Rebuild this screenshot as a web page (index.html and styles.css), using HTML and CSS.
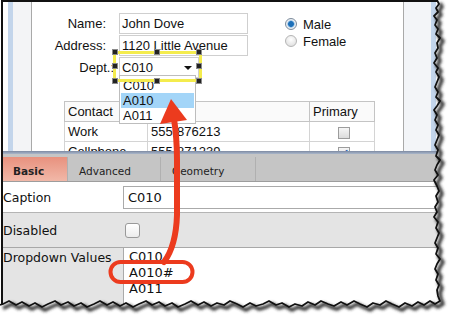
FILE: index.html
```html
<!DOCTYPE html>
<html lang="en">

<head>
    <meta charset="UTF-8">
    <title>Dropdown Values</title>
    <link rel="stylesheet" href="styles.css">
</head>

<body>
    <div class="shot">
        <div class="sheet">
            <section class="designer">
                <div class="gutter"></div>
                <div class="canvas">
                    <div class="top-fields">
                        <div class="fields">
                            <label class="lbl">Name:</label>
                            <div class="field">John Dove</div>
                            <label class="lbl">Address:</label>
                            <div class="field">1120 Little Avenue</div>
                            <label class="lbl lbl-dept">Dept.:</label>
                            <div class="field select">C010<span class="caret"></span></div>
                        </div>
                        <div class="radios">
                            <div class="radio on"><span class="dot"></span>Male</div>
                            <div class="radio"><span class="dot"></span>Female</div>
                        </div>
                    </div>

                    <table class="contacts">
                        <tr class="head">
                            <td class="c-contact">Contact</td>
                            <td class="c-phone"></td>
                            <td class="c-primary">Primary</td>
                        </tr>
                        <tr>
                            <td>Work</td>
                            <td>555-876213</td>
                            <td class="c-check"><span class="tick"></span></td>
                        </tr>
                        <tr>
                            <td>Cellphone</td>
                            <td>555-871239</td>
                            <td class="c-check"><span class="tick checked">&#10003;</span></td>
                        </tr>
                    </table>

                    <!-- open dropdown of the Dept. field -->
                    <ul class="picker">
                        <li>C010</li>
                        <li class="hl">A010</li>
                        <li>A011</li>
                    </ul>

                    <!-- designer selection around the Dept. field -->
                    <div class="selection">
                        <span class="h l t"></span><span class="h c t"></span><span class="h r t"></span>
                        <span class="h l m"></span><span class="h r m"></span>
                        <span class="h l b"></span><span class="h c b"></span><span class="h r b"></span>
                    </div>
                </div>
                <div class="side"></div>
            </section>

            <div class="divider"></div>

            <section class="props">
                <div class="tabs">
                    <div class="tab active">Basic</div>
                    <div class="tab">Advanced</div>
                    <div class="tab">Geometry</div>
                </div>
                <div class="row row-caption">
                    <div class="key">Caption</div>
                    <div class="text-input">C010</div>
                </div>
                <div class="row row-disabled">
                    <div class="key">Disabled</div>
                    <span class="checkbox"></span>
                </div>
                <div class="row row-values">
                    <div class="key">Dropdown Values</div>
                    <div class="textarea">C010<br>A010#<br>A011</div>
                </div>
            </section>
        </div>

        <svg class="callout" width="453" height="320" viewBox="0 0 453 320">
            <rect x="110.5" y="262" width="82" height="20" rx="10" fill="none" stroke="#ec3b1e" stroke-width="4" />
            <path d="M164 262 Q176 246 177 215 L177 160 Q177 138 174 119" fill="none" stroke="#ec3b1e"
                stroke-width="6" stroke-linecap="round" />
            <polygon points="171,99 160,124 187,120" fill="#ec3b1e" />
        </svg>

        <!-- torn paper edges -->
        <svg class="edges" width="453" height="320" viewBox="0 0 453 320">
            <defs>
                <filter id="soft" x="-10%" y="-10%" width="120%" height="120%">
                    <feGaussianBlur stdDeviation="1.8" />
                </filter>
            </defs>
            <path fill="#fff"
                d="M437,0 L439,4 L436,8 L438,12 L434,16 L437,20 L435,25 L438,29 L436,34 L440,38 L437,43 L438,48 L435,53 L437,58 L434,63 L438,68 L436,72 L439,77 L437,82 L435,87 L438,92 L436,97 L440,101 L437,106 L434,110 L437,115 L435,120 L438,125 L436,130 L439,135 L437,140 L435,145 L438,150 L436,156 L440,160 L437,165 L435,170 L438,175 L434,180 L437,186 L439,191 L436,196 L438,202 L435,207 L437,212 L434,217 L438,222 L436,228 L439,233 L437,238 L435,243 L438,248 L436,254 L440,259 L437,264 L435,269 L438,274 L436,280 L439,285 L437,290 L438,296 L440,301 L435,304 L430,301 L424,305 L418,302 L412,306 L405,303 L399,307 L392,304 L386,301 L380,305 L373,303 L367,307 L360,304 L354,301 L347,305 L341,302 L334,306 L328,304 L321,301 L315,305 L308,302 L302,306 L295,304 L289,307 L282,303 L276,305 L269,301 L263,304 L256,306 L250,303 L243,307 L237,304 L230,301 L224,305 L217,303 L211,306 L204,302 L198,305 L191,301 L185,304 L178,307 L172,303 L165,306 L159,302 L152,305 L146,301 L139,304 L133,307 L126,303 L120,306 L113,302 L107,305 L100,301 L94,304 L87,307 L81,303 L74,306 L68,302 L61,305 L55,301 L48,304 L42,307 L35,303 L29,306 L22,302 L16,305 L9,301 L3,304 L0,305 L0,320 L453,320 L453,0 Z" />
            <path class="edge-line" stroke="#333" stroke-width="3.5" filter="url(#soft)" transform="translate(3 3)"
                d="M437,0 L439,4 L436,8 L438,12 L434,16 L437,20 L435,25 L438,29 L436,34 L440,38 L437,43 L438,48 L435,53 L437,58 L434,63 L438,68 L436,72 L439,77 L437,82 L435,87 L438,92 L436,97 L440,101 L437,106 L434,110 L437,115 L435,120 L438,125 L436,130 L439,135 L437,140 L435,145 L438,150 L436,156 L440,160 L437,165 L435,170 L438,175 L434,180 L437,186 L439,191 L436,196 L438,202 L435,207 L437,212 L434,217 L438,222 L436,228 L439,233 L437,238 L435,243 L438,248 L436,254 L440,259 L437,264 L435,269 L438,274 L436,280 L439,285 L437,290 L438,296 L440,301 L435,304 L430,301 L424,305 L418,302 L412,306 L405,303 L399,307 L392,304 L386,301 L380,305 L373,303 L367,307 L360,304 L354,301 L347,305 L341,302 L334,306 L328,304 L321,301 L315,305 L308,302 L302,306 L295,304 L289,307 L282,303 L276,305 L269,301 L263,304 L256,306 L250,303 L243,307 L237,304 L230,301 L224,305 L217,303 L211,306 L204,302 L198,305 L191,301 L185,304 L178,307 L172,303 L165,306 L159,302 L152,305 L146,301 L139,304 L133,307 L126,303 L120,306 L113,302 L107,305 L100,301 L94,304 L87,307 L81,303 L74,306 L68,302 L61,305 L55,301 L48,304 L42,307 L35,303 L29,306 L22,302 L16,305 L9,301 L3,304 L0,305" />
            <path class="edge-line" stroke="#111" stroke-width="1.8"
                d="M437,0 L439,4 L436,8 L438,12 L434,16 L437,20 L435,25 L438,29 L436,34 L440,38 L437,43 L438,48 L435,53 L437,58 L434,63 L438,68 L436,72 L439,77 L437,82 L435,87 L438,92 L436,97 L440,101 L437,106 L434,110 L437,115 L435,120 L438,125 L436,130 L439,135 L437,140 L435,145 L438,150 L436,156 L440,160 L437,165 L435,170 L438,175 L434,180 L437,186 L439,191 L436,196 L438,202 L435,207 L437,212 L434,217 L438,222 L436,228 L439,233 L437,238 L435,243 L438,248 L436,254 L440,259 L437,264 L435,269 L438,274 L436,280 L439,285 L437,290 L438,296 L440,301 L435,304 L430,301 L424,305 L418,302 L412,306 L405,303 L399,307 L392,304 L386,301 L380,305 L373,303 L367,307 L360,304 L354,301 L347,305 L341,302 L334,306 L328,304 L321,301 L315,305 L308,302 L302,306 L295,304 L289,307 L282,303 L276,305 L269,301 L263,304 L256,306 L250,303 L243,307 L237,304 L230,301 L224,305 L217,303 L211,306 L204,302 L198,305 L191,301 L185,304 L178,307 L172,303 L165,306 L159,302 L152,305 L146,301 L139,304 L133,307 L126,303 L120,306 L113,302 L107,305 L100,301 L94,304 L87,307 L81,303 L74,306 L68,302 L61,305 L55,301 L48,304 L42,307 L35,303 L29,306 L22,302 L16,305 L9,301 L3,304 L0,305" />
        </svg>
    </div>
</body>

</html>
```

FILE: styles.css
```css
/* screenshot frame */
body {
    margin: 0;
    background-color: #ffffff;
    font-family: 'Liberation Sans', Arial, sans-serif;
}

.shot {
    position: relative;
    width: 453px;
    height: 320px;
    overflow: hidden;
}

.sheet {
    margin-left: 1px;
    height: 318px;
    border-top: 2px solid #111;
    border-left: 2px solid #111;
    display: flex;
    flex-direction: column;
}

/* form designer */
.designer {
    display: flex;
    height: 149px;
    flex-shrink: 0;
}

.gutter {
    width: 28px;
    border-right: 1px solid #a9a9a9;
    background: linear-gradient(to right, #ffffff 0 5px, #c3d5eb 5px 10px, #f3f4f6 10px);
}

.canvas {
    position: relative;
    width: 371px;
    padding-top: 11px;
    border-right: 1px solid #a9a9a9;
    background-color: #ffffff;
    overflow: hidden;
    font-size: 13px;
    color: #111;
}

.side {
    flex: 1;
    background: linear-gradient(to right, #f3f5f8 0 27px, #c3d5eb 27px 32px, #ffffff 32px);
}

.top-fields {
    display: flex;
    gap: 37px;
}

.fields {
    display: grid;
    grid-template-columns: 74px 129px;
    column-gap: 13px;
    row-gap: 1px;
}

.lbl {
    text-align: right;
    line-height: 21px;
}

.lbl-dept {
    margin-right: -8px;
}

.field {
    height: 21px;
    box-sizing: border-box;
    border: 1px solid #cfcfcf;
    padding-left: 2px;
    line-height: 19px;
}

.select {
    width: 80px;
    display: flex;
    justify-content: space-between;
    align-items: center;
    padding-right: 6px;
}

.caret {
    border-left: 4px solid transparent;
    border-right: 4px solid transparent;
    border-top: 4px solid #111;
}

.radios {
    padding-top: 5px;
    display: flex;
    flex-direction: column;
    gap: 5px;
}

.radio {
    display: flex;
    align-items: center;
    gap: 6px;
    height: 12px;
}

.dot {
    width: 10px;
    height: 10px;
    border-radius: 50%;
    border: 1px solid #b5b5b5;
    background: radial-gradient(circle at 50% 35%, #ffffff, #d9d9d9);
}

.radio.on .dot {
    border-color: #7d8c9c;
    background: radial-gradient(circle, #1d6fb8 0 2.5px, #6aa8dc 3px, #e9eef3 4px);
}

.contacts {
    margin: 23px 0 0 32px;
    width: 311px;
    border-collapse: collapse;
    font-size: 13px;
}

.contacts td {
    height: 19px;
    padding: 0 3px;
    border: 1px solid #d4d4d4;
    white-space: nowrap;
}

.contacts .head td {
    border-color: #c4c4c4;
    background-color: #fafafa;
}

.c-contact {
    width: 76px;
}

.c-phone {
    width: 155px;
}

.c-check {
    text-align: center;
}

.tick {
    display: inline-block;
    width: 10px;
    height: 10px;
    margin-left: 4px;
    vertical-align: middle;
    border: 1px solid #9c9c9c;
    background: linear-gradient(#f6f6f6, #dcdcdc);
    font-size: 11px;
    line-height: 10px;
    color: #2f64b0;
    font-weight: bold;
}

/* dropdown list shown open */
.picker {
    position: absolute;
    left: 87px;
    top: 73px;
    width: 77px;
    margin: 0;
    padding: 0;
    list-style: none;
    background-color: #ffffff;
    border: 1px solid #bdbdbd;
    box-sizing: border-box;
}

.picker li {
    height: 15px;
    line-height: 15px;
    padding-left: 2px;
    margin: 0 1px;
}

.picker li:first-child {
    height: 17px;
    line-height: 19px;
}

.picker li.hl {
    background-color: #a3d5f8;
}

.selection {
    position: absolute;
    left: 81px;
    top: 49px;
    width: 89px;
    height: 31px;
}

.selection::before {
    content: "";
    position: absolute;
    inset: 0;
    border: 3px solid #f4ec4e;
}

.h {
    position: absolute;
    width: 4px;
    height: 4px;
    background-color: #222;
    border: 1px solid #8a8a8a;
    transform: translate(-50%, -50%);
}

.h.l { left: 2px; }
.h.c { left: 44px; }
.h.r { left: 86px; }
.h.t { top: 1px; }
.h.m { top: 15px; }
.h.b { top: 30px; }

.divider {
    height: 3px;
    flex-shrink: 0;
    background: linear-gradient(#7d8aa2, #aab7cb);
}

/* property editor */
.props {
    flex: 1;
    display: flex;
    flex-direction: column;
    font-family: 'DejaVu Sans', Verdana, sans-serif;
    font-size: 12.5px;
    color: #111;
}

.tabs {
    display: flex;
    height: 28px;
    box-sizing: border-box;
    padding-top: 3px;
    background-color: #c5c5c5;
    border-bottom: 1px solid #9d9d9d;
}

.tab {
    padding: 8px 0 0 11px;
    font-size: 10.5px;
    color: #222;
    border-right: 1px solid #b0b0b0;
}

.tab:nth-child(1) { width: 54px; padding-left: 10px; }
.tab:nth-child(2) { width: 81px; }
.tab:nth-child(3) { width: 83px; }

.tab.active {
    font-weight: bold;
    background: linear-gradient(#e8917e, #f1b8a8);
}

.row {
    display: flex;
}

.key {
    width: 120px;
    flex-shrink: 0;
}

.row-caption {
    height: 30px;
    align-items: center;
    background-color: #ffffff;
}

.text-input {
    flex: 1;
    height: 23px;
    box-sizing: border-box;
    border: 1px solid #aaaaaa;
    padding-left: 4px;
    line-height: 21px;
    font-size: 13px;
}

.row-disabled {
    height: 34px;
    align-items: center;
    background-color: #e4e4e4;
    border-top: 1px solid #b4b4b4;
}

.checkbox {
    width: 13px;
    height: 13px;
    margin-left: 2px;
    border: 1px solid #999;
    border-radius: 3px;
    background: linear-gradient(#ffffff, #ececec);
}

.row-values {
    flex: 1;
    background-color: #e4e4e4;
    border-top: 1px solid #a8a8a8;
}

.row-values .key {
    padding-top: 2px;
}

.textarea {
    flex: 1;
    padding: 1px 5px;
    background-color: #ffffff;
    border-left: 1px solid #aaaaaa;
    font-size: 13px;
    line-height: 16px;
}

/* overlays */
.callout,
.edges {
    position: absolute;
    left: 0;
    top: 0;
}

.edge-line {
    fill: none;
    stroke-linejoin: round;
}
```
